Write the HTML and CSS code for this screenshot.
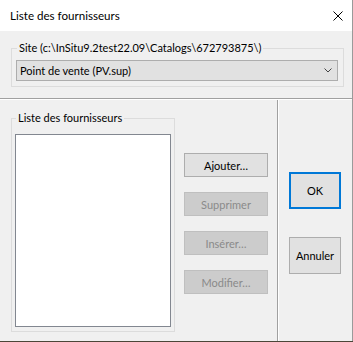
FILE: index.html
```html
<!DOCTYPE html>
<html lang="fr">
<head>
    <meta charset="UTF-8">
    <meta name="viewport" content="width=device-width, initial-scale=1.0">
    <title>Liste des fournisseurs</title>
    <link rel="stylesheet" href="styles.css">
</head>
<body>
    <div class="dialog">
        <div class="titlebar">
            <span class="title">Liste des fournisseurs</span>
            <svg class="close" width="10" height="10" viewBox="0 0 10 10">
                <path d="M0.5 0.5 L9.5 9.5 M9.5 0.5 L0.5 9.5" stroke="#000" stroke-width="1" fill="none"/>
            </svg>
        </div>

        <div class="top-pane">
            <fieldset class="group site-group">
                <legend>Site (c:\InSitu9.2test22.09\Catalogs\672793875\)</legend>
                <div class="combo">
                    <span>Point de vente (PV.sup)</span>
                    <svg class="chevron" width="8" height="5" viewBox="0 0 8 5">
                        <path d="M0.5 0.5 L4 4 L7.5 0.5" stroke="#444" stroke-width="1" fill="none"/>
                    </svg>
                </div>
            </fieldset>
        </div>

        <div class="bottom-pane">
            <div class="left-pane">
                <fieldset class="group list-group">
                    <legend>Liste des fournisseurs</legend>
                    <div class="listbox"></div>
                </fieldset>
                <div class="actions">
                    <button class="btn">Ajouter…</button>
                    <button class="btn" disabled>Supprimer</button>
                    <button class="btn" disabled>Insérer…</button>
                    <button class="btn" disabled>Modifier…</button>
                </div>
            </div>
            <div class="right-pane">
                <button class="btn big default">OK</button>
                <button class="btn big">Annuler</button>
            </div>
        </div>
    </div>
</body>
</html>
```

FILE: styles.css
```css
/* Windows style dialog */
body {
    margin: 0;
    background-color: #4b4638;
    font-family: Lato, "Noto Sans", Arial, sans-serif;
    font-size: 11px;
    color: #000;
}

.dialog {
    width: 353px;
    height: 341px;
    box-sizing: border-box;
    background-color: #f0f0f0;
    border-right: 1px solid #9a9a9a;
    display: flex;
    flex-direction: column;
}

.titlebar {
    height: 31px;
    flex: none;
    background-color: #fff;
    display: flex;
    align-items: center;
    justify-content: space-between;
    padding: 0 9px 0 10px;
}

.title {
    font-size: 11.6px;
    line-height: 16px;
}

.close {
    display: block;
    margin-top: 1px;
}

.top-pane {
    height: 68px;
    flex: none;
    border-bottom: 1px solid #a0a0a0;
    padding: 9px 0 0 11px;
    box-sizing: border-box;
}

.group {
    margin: 0;
    border: 1px solid #dcdcdc;
    min-width: 0;
}

.group legend {
    padding: 0 2px;
    margin-left: 1px;
    line-height: 16px;
}

.site-group {
    width: 333px;
    box-sizing: border-box;
    padding: 4px 5px 5px 4px;
}

.combo {
    height: 21px;
    box-sizing: border-box;
    background-color: #e1e1e1;
    border: 1px solid #adadad;
    display: flex;
    align-items: center;
    justify-content: space-between;
    padding: 0 5px 0 3px;
}

.chevron {
    display: block;
}

.bottom-pane {
    flex: 1;
    display: flex;
    border-top: 1px solid #fff;
}

.left-pane {
    width: 277px;
    flex: none;
    display: flex;
    align-items: flex-start;
    border-right: 1px solid #a0a0a0;
}

.list-group {
    margin: 10px 0 0 11px;
    width: 164px;
    box-sizing: border-box;
    padding: 8px 3px 4px 3px;
}

.listbox {
    height: 193px;
    box-sizing: border-box;
    background-color: #fff;
    border: 1px solid #828790;
}

.actions {
    margin: 53px 0 0 9px;
    display: flex;
    flex-direction: column;
    gap: 15px;
}

.btn {
    font-family: Lato, "Noto Sans", Arial, sans-serif;
    font-size: 11px;
    color: #000;
    width: 84px;
    height: 24px;
    padding: 0;
    background-color: #e1e1e1;
    border: 1px solid #adadad;
    border-radius: 0;
}

.btn:disabled {
    background-color: #cccccc;
    border-color: #bfbfbf;
    color: #8a8a8a;
}

.right-pane {
    flex: 1;
    border-left: 1px solid #fff;
    display: flex;
    flex-direction: column;
    align-items: flex-start;
    padding: 72px 0 0 10px;
    gap: 28px;
}

.btn.big {
    width: 52px;
    height: 37px;
}

.btn.default {
    border: 2px solid #0078d7;
}
```
